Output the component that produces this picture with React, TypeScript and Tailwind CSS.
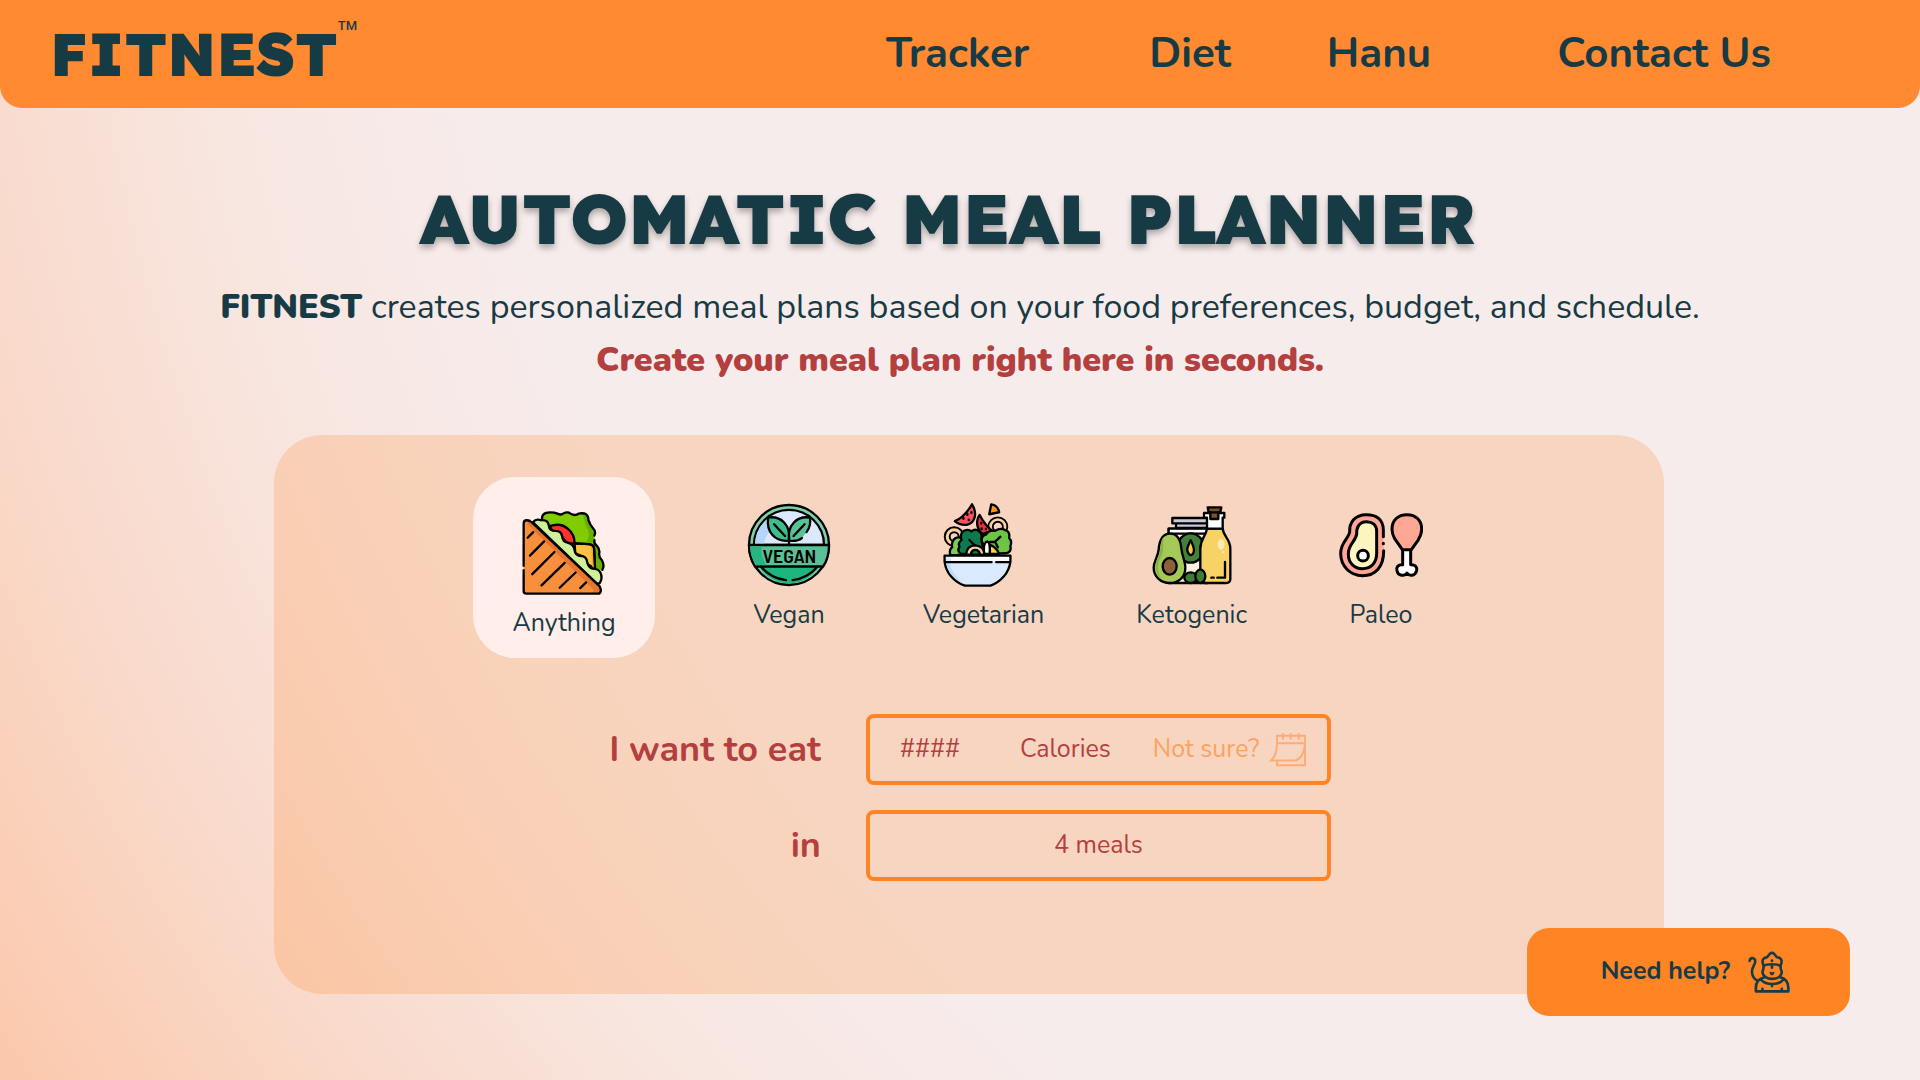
import { useState, type ReactNode } from 'react'

const ink = '#000'

function SandwichIcon() {
  return (
    <svg aria-hidden="true" viewBox="184 122 252 254" className="size-[84px]" fill="none" stroke={ink} strokeWidth="7" strokeLinecap="round" strokeLinejoin="round">
      <path stroke="none" fill="#80cc00" d="M240 150Q246 126 268 126Q282 126 290 130Q302 136 310 128Q322 124 330 130Q344 138 354 130Q384 124 384 150Q390 166 396 172Q408 184 402 200Q400 222 410 228Q420 240 416 252Q416 262 424 270Q434 286 426 300L400 300L300 190Z" />
      <path stroke="none" fill="#6bb000" d="M366 128Q384 128 384 150Q390 166 396 172Q408 184 402 200Q400 222 410 228Q420 240 416 252Q416 262 424 270Q434 286 426 300L410 296L398 222L378 215Q394 190 376 168Q372 150 366 128Z" />
      <path d="M244 150Q240 126 268 126Q282 126 290 130Q302 136 310 128Q322 124 330 130Q344 138 354 130Q384 124 384 150Q390 166 396 172Q408 184 402 196M402 210Q400 222 410 228Q420 240 416 252Q416 262 424 270Q434 286 426 300" />
      <path fill="#fa3232" d="M267 168Q300 156 322 176Q342 192 342 220L322 222L300 196L276 184Z" />
      <path fill="#ffc142" d="M342 220L386 222Q400 224 401 236L404 296L380 282L372 262L344 250Z" />
      <path stroke="#f5a623" strokeWidth="5" d="M394 230L398 290" />
      <path d="M342 220L386 222Q400 224 401 236L404 296" />
      <path fill="#d0f09c" d="M216 156Q226 144 240 150Q262 148 264 166Q266 182 284 182Q302 182 304 198Q306 216 322 218Q340 222 342 240Q344 258 362 258Q378 260 380 276Q384 294 396 296Q414 296 420 308Q428 324 418 340L410 342Z" />
      <path stroke="none" fill="#f78f3d" d="M188 364V160Q188 150 198 150Q206 150 212 156L418 350Q426 366 416 372H196Q188 372 188 364Z" />
      <path stroke="none" fill="#e5752f" d="M202 150L212 156L418 350Q424 366 416 371L396 371Q402 362 394 354L200 162Z" />
      <path d="M188 288V160Q188 150 198 150Q206 150 212 156L418 350Q426 366 416 372H196Q188 372 188 364V301" />
      <path d="M200 203L217 186M207 257L250 214M214 313L281 246M242 347L312 279M297 354L345 308M359 355L377 338" />
    </svg>
  )
}

function VeganIcon() {
  return (
    <svg aria-hidden="true" viewBox="75 38 252 254" className="size-[84px]" fill="none" stroke={ink} strokeWidth="7" strokeLinecap="round" strokeLinejoin="round">
      <circle cx="201" cy="165" r="121" fill="#7fd0ab" />
      <path fill="#dbe9ff" d="M95 165A106 106 0 0 1 307 165Z" />
      <path stroke="none" fill="#b5d6fb" d="M98 163A104 104 0 0 1 142 82Q140 100 148 120Q126 140 126 163Z" />
      <path stroke="none" fill="#1fb57f" d="M98 165H304V200A106 106 0 0 1 98 200Z" />
      <path fill="#5ac096" d="M80 165H322Q322 205 304 230H98Q80 200 80 165Z" />
      <path stroke="none" fill="#27b583" d="M84 169H118V192Q124 214 132 226H101Q84 200 84 169Z" />
      <path d="M116 230Q146 266 192 271M212 271Q256 266 288 230" />
      <path fill="#3dbd8b" d="M200 152C158 156 132 126 138 82C176 76 208 104 200 152Z" />
      <path fill="#5ac096" d="M254 126C268 108 266 92 264 82C226 76 194 104 202 152C216 154 230 152 240 144" />
      <path d="M156 102L189 138M248 102L215 138M201 150V163" />
      <text x="202" y="219" textAnchor="middle" fill={ink} stroke="none" className="font-['Barlow_Semi_Condensed','Barlow','Roboto',sans-serif] text-[60px] font-semibold">VEGAN</text>
    </svg>
  )
}

function SaladIcon() {
  return (
    <svg aria-hidden="true" viewBox="97 38 210 254" className="mr-3 h-[84px] w-[70px]" fill="none" stroke={ink} strokeWidth="7" strokeLinecap="round" strokeLinejoin="round">
      <circle cx="262" cy="110" r="22" strokeWidth="19" />
      <circle cx="262" cy="110" r="22" stroke="#fbd3a0" strokeWidth="8" />
      <circle cx="130" cy="140" r="21" strokeWidth="21" />
      <circle cx="130" cy="140" r="21" stroke="#fbd3a0" strokeWidth="9" />
      <path fill="#f9525e" d="M132 93Q160 82 184 42C200 68 195 98 168 104C150 106 140 100 132 93Z" />
      <path d="M158 84V86M170 72V74M174 88V90M182 66V68" />
      <path fill="#ff9416" d="M242 42L236 72L266 66C264 52 256 44 242 42Z" />
      <path fill="#e8323f" d="M207 74C194 92 198 116 215 132L244 122Q220 100 207 74Z" />
      <path d="M212 98V100M226 116V118M213 115V117" />
      <path fill="#7ccb5a" d="M118 196Q114 178 124 172Q120 154 134 144Q148 138 160 150L170 196Z" />
      <path fill="#0c7a4e" d="M150 192Q138 184 146 170Q140 160 152 150Q146 130 160 122Q174 116 182 124Q194 114 206 124Q216 134 212 146L220 192Z" />
      <path fill="#6cc644" d="M214 156Q210 138 226 134Q234 120 254 122Q270 112 284 120Q300 124 296 144Q306 152 300 168Q304 186 286 190L240 192Z" />
      <path d="M176 150L192 166M238 156H252L270 140M254 156L262 172" />
      <path fill="#fff" d="M220 192Q218 156 230 154Q240 158 238 192Z" />
      <path fill="#fcd53f" d="M238 192V164Q258 172 266 192Z" />
      <path fill="#fbd3a0" d="M166 194Q168 166 194 166Q220 168 222 194Z" />
      <path fill="#0c7a4e" d="M180 194Q182 180 194 180Q206 180 208 194Z" />
      <path fill="#d9eaff" d="M101 197H300V215C296 250 270 276 240 288H162C130 276 105 250 101 215Z" />
      <path stroke="none" fill="#bdd9f8" d="M106 220H116Q124 256 160 284Q114 262 106 220Z" />
      <path stroke="none" fill="#fff" d="M120 201H296V213H120Z" />
      <path d="M103 217H243M257 217H298" />
    </svg>
  )
}

function KetoIcon() {
  return (
    <svg aria-hidden="true" viewBox="82 44 240 240" className="my-0.5 size-20" fill="none" stroke={ink} strokeWidth="7" strokeLinecap="round" strokeLinejoin="round">
      <path fill="#fdf3e0" d="M132 278V115H250V278Z" />
      <path fill="#fff" d="M132 130V115H250V130Z" />
      <path fill="#c9c9d8" d="M154 99H248V113H154ZM143 83H248V99H143Z" />
      <ellipse cx="198" cy="173" rx="40" ry="44" fill="#43803a" />
      <path fill="#f7c948" d="M198 150Q186 172 188 180Q192 194 198 194Q206 194 208 180Q208 170 198 150Z" />
      <ellipse cx="198" cy="262" rx="19" ry="16" fill="#3f7d32" />
      <path fill="#a5c957" d="M136 130C160 130 168 150 170 175C172 196 182 214 182 232C182 262 160 278 135 278C108 278 87 258 87 232C87 212 100 200 102 178C104 150 112 130 136 130Z" />
      <path stroke="none" fill="#8bb045" d="M118 138C106 152 108 180 104 192C86 222 90 252 112 268C92 240 100 218 112 192C120 172 112 154 118 138Z" />
      <ellipse cx="135" cy="228" rx="21" ry="25" fill="#8a6138" />
      <path fill="#f7d366" d="M247 115C244 138 227 144 227 175V266Q227 278 240 278H304Q317 278 317 266V175C317 146 296 138 294 115Z" />
      <path fill="#fff" d="M247 115V82H238V68H299V82H294V115Z" />
      <path fill="#7a4f2c" d="M249 51H290L287 66H281V86H257V66H252Z" />
      <path d="M252 66H287" />
      <ellipse cx="289" cy="162" rx="10" ry="16" stroke="none" fill="#fdeab0" />
      <circle cx="296" cy="185" r="4" stroke="none" fill="#fdeab0" />
      <path d="M301 215V262H278M267 262H260" />
      <ellipse cx="227" cy="258" rx="15" ry="20" fill="#3f7d32" />
    </svg>
  )
}

function PaleoIcon() {
  return (
    <svg aria-hidden="true" viewBox="45 9 252 252" className="size-[84px]" fill="none" stroke={ink} strokeWidth="9" strokeLinecap="round" strokeLinejoin="round">
      <path stroke="none" fill="#ffa795" d="M178 112V90C178 56 155 44 127 44C92 44 76 68 77 95C75 116 50 125 50 160C50 200 80 227 115 227C155 227 179 200 179 152Z" />
      <path d="M178 110V90C178 56 155 44 127 44C92 44 76 68 77 95C75 116 50 125 50 160C50 200 80 227 115 227C155 227 179 200 179 152M178 130V131" />
      <path fill="#fdf5c0" d="M158 94C158 74 144 65 127 65C106 65 97 82 98 102C95 125 73 132 73 162C73 190 92 206 115 206C142 206 158 188 158 160Z" />
      <circle cx="117" cy="167" r="16" fill="#fff" />
      <path fill="#fff" d="M236 148V194C222 193 216 202 219 212C222 228 242 230 249 219C256 230 274 228 278 212C280 202 274 193 260 194V148Z" />
      <path fill="#ffa795" d="M235 149L212 116C206 106 204 98 204 88C204 60 222 44 249 44C275 44 293 60 293 88C293 102 288 112 282 121L262 149Z" />
    </svg>
  )
}

function CalendarIcon() {
  return (
    <svg aria-hidden="true" viewBox="33 82 114 104" className="h-[35px] w-[38px]" fill="none" stroke="#ffab74" strokeWidth="6">
      <path d="M57 115V93H141V181H57V168M57 115H141" />
      <path d="M57 115C57 140 50 158 39 167H114C130 160 139 142 141 118" />
      <path d="M75 85V104M98 85V104M122 85V104" />
    </svg>
  )
}

function MonkeyIcon() {
  return (
    <svg aria-hidden="true" viewBox="40 46 128 128" className="size-[42px]" fill="none" stroke="#173b45" strokeWidth="8" strokeLinecap="round" strokeLinejoin="round">
      <path d="M45 76C47 64 63 66 62 78C61 90 51 96 52 111C54 125 60 132 68 136" />
      <path d="M90 126C74 130 64 142 64 158V169H163V158C163 142 154 130 138 126" />
      <path d="M88 90C80 76 86 66 98 65L106 55Q113 49 120 55L128 65C142 66 146 76 139 90" />
      <path d="M88 91C98 85 128 85 139 91" />
      <path d="M88 92C88 98 86 104 84 110C85 124 99 131 113 131C128 131 142 124 143 110C140 104 139 98 139 92" />
      <path d="M80 134C96 151 132 151 147 134M113 147V153M84 161V168M143 161V168M113 75V76M113 92V97" />
      <path fill="#173b45" strokeWidth="5" d="M108 112Q113 114 118 112Q117 117 113 118Q109 117 108 112Z" />
    </svg>
  )
}

const links = [
  { label: 'Tracker', space: '' },
  { label: 'Diet', space: 'ml-30' },
  { label: 'Hanu', space: 'ml-24' },
  { label: 'Contact Us', space: 'ml-[126px]' },
]

const diets: { name: string; icon: ReactNode }[] = [
  { name: 'Anything', icon: <SandwichIcon /> },
  { name: 'Vegan', icon: <VeganIcon /> },
  { name: 'Vegetarian', icon: <SaladIcon /> },
  { name: 'Ketogenic', icon: <KetoIcon /> },
  { name: 'Paleo', icon: <PaleoIcon /> },
]

export default function App() {
  const [diet, setDiet] = useState('Anything')
  return (
    <div className="flex min-h-screen flex-col bg-[#f7ecec] bg-[radial-gradient(circle_at_113%_-24%,#f7ecec_68%,#f8e6e0_78%,#f9dbcd_87%,#fbc8ab_100%)] font-['Nunito','Open_Sans',sans-serif] text-[#173b45]">
      <header className="flex h-[108px] items-center justify-between rounded-b-[22px] bg-[#ff8a31] pr-[149px] pl-[50px]">
        <a href="#home" className="flex font-['Lexend','Inter',sans-serif] text-[60px] leading-[72px] font-black">
          FITNEST<span className="font-['Roboto',sans-serif] text-[13px] leading-4 font-medium">TM</span>
        </a>
        <nav className="flex text-[42px] leading-[52px] font-bold">
          {links.map((l) => (
            <a key={l.label} href={`#${l.label.toLowerCase().replace(' ', '-')}`} className={l.space}>{l.label}</a>
          ))}
        </nav>
      </header>

      <main className="pb-20">
        <h1 className="pt-[74px] pr-6 text-center font-['Lexend','Inter',sans-serif] text-[70px] leading-[72px] font-black text-shadow-[0_4px_6px_rgb(0_0_0/0.3)]">
          AUTOMATIC MEAL PLANNER
        </h1>
        <div className="mt-[27px] text-center text-[34px] leading-[53px]">
          <p><strong className="font-black">FITNEST</strong> creates personalized meal plans based on your food preferences, budget, and schedule.</p>
          <p className="font-black text-[#b43f3f]">Create your meal plan right here in seconds.</p>
        </div>

        <section className="mt-12 mr-[13.33%] ml-[14.27%] rounded-[48px] bg-[#ff8424]/22 pt-[42px] pb-[113px]">
          <div className="flex items-start justify-center gap-[92px] pr-[42px]">
            {diets.map((d) => (
              <button
                key={d.name}
                type="button"
                aria-pressed={diet === d.name}
                onClick={() => setDiet(d.name)}
                className={diet === d.name
                  ? 'flex w-[182px] flex-col items-center rounded-[42px] bg-[#ffeeea] pt-[34px] pb-[19px]'
                  : 'flex min-w-[84px] flex-col items-center pt-[26px]'}
              >
                {d.icon}
                <span className="mt-3 text-[25px] leading-8">{d.name}</span>
              </button>
            ))}
          </div>

          <form className="mt-14 grid grid-cols-[auto_465px] items-center justify-center gap-x-[45px] gap-y-[25px] pl-0.5 text-[25px] text-[#b43f3f]">
            <label htmlFor="calories" className="text-right text-[36px] leading-[44px] font-bold">I want to eat</label>
            <div className="flex h-[71px] items-center rounded-lg border-4 border-[#ff8424] pl-[30px]">
              <input id="calories" placeholder="####" className="w-[120px] bg-transparent outline-none placeholder:text-[#b43f3f]" />
              <span>Calories</span>
              <button type="button" className="ml-[42px] flex items-center gap-2.5 text-[#fba35f]">
                Not sure?
                <CalendarIcon />
              </button>
            </div>
            <label htmlFor="meals" className="text-right text-[36px] leading-[44px] font-bold">in</label>
            <select id="meals" defaultValue="4" className="h-[71px] appearance-none rounded-lg border-4 border-[#ff8424] bg-transparent text-center [text-align-last:center]">
              <option value="3">3 meals</option>
              <option value="4">4 meals</option>
              <option value="5">5 meals</option>
            </select>
          </form>
        </section>
      </main>

      <button type="button" className="fixed right-[70px] bottom-16 flex h-[88px] w-[323px] items-center justify-center gap-[18px] rounded-[22px] bg-[#ff8424] pl-3.5 text-[25px] font-bold">
        Need help?
        <MonkeyIcon />
      </button>
    </div>
  )
}
